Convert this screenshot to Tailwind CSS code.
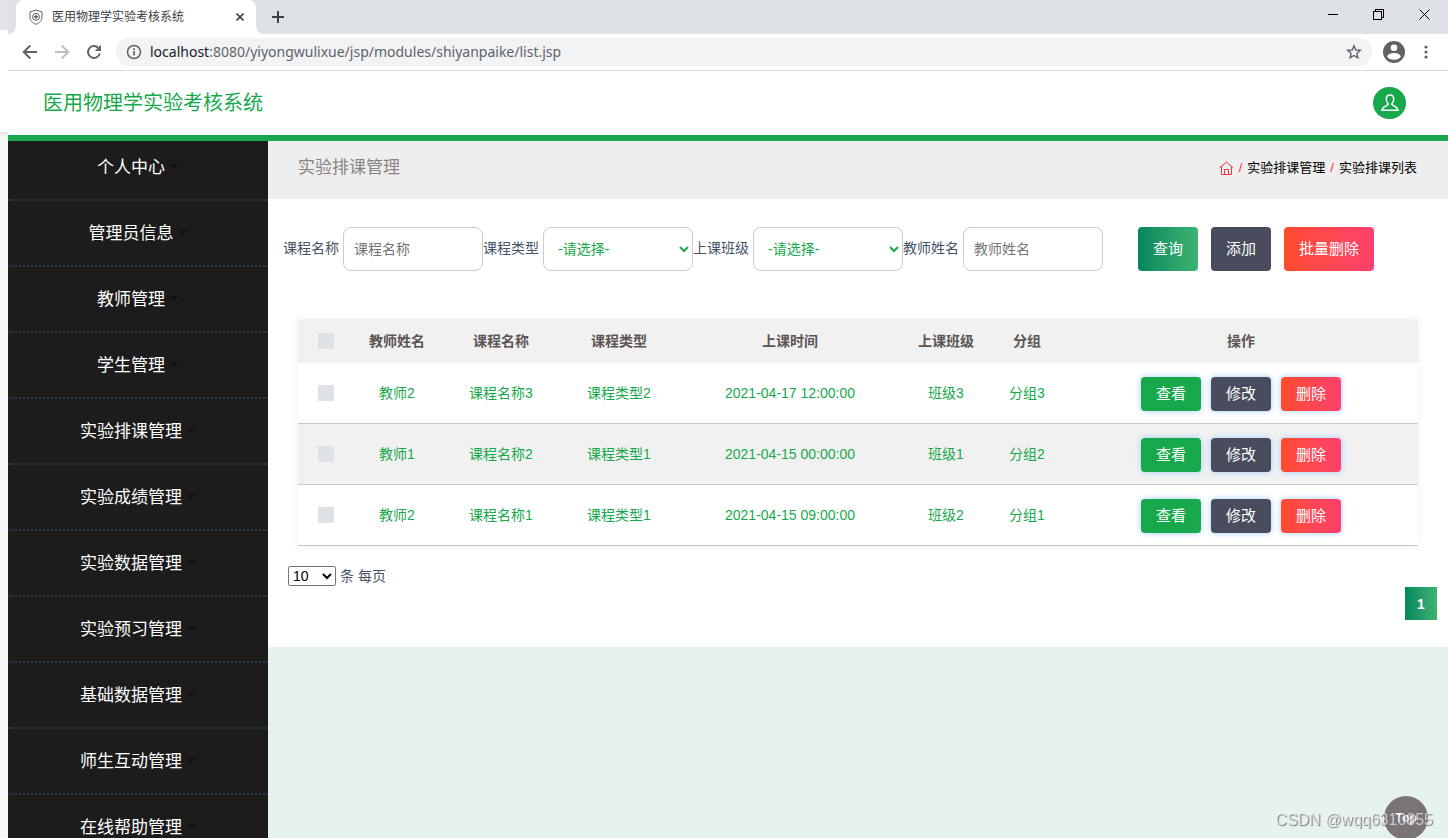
<!DOCTYPE html>
<html lang="zh-CN">
<head>
<meta charset="utf-8">
<title>医用物理学实验考核系统</title>
<script src="https://cdn.jsdelivr.net/npm/@tailwindcss/browser@4"></script>
</head>
<body class="flex h-screen overflow-hidden bg-white font-['Liberation_Sans','Noto_Sans_CJK_SC',sans-serif] text-sm text-[#455468]">

<!-- Edge of the window behind -->
<div class="flex w-2 shrink-0 flex-col">
  <div class="h-[30px] bg-[#e2e4e9]"></div>
  <div class="h-[102px] bg-white"></div>
  <div class="h-1 bg-linear-to-b from-[#e3e4e6] to-[#f5f7f9]"></div>
  <div class="flex-1 bg-[#f5f7f9]"></div>
</div>

<div class="flex min-w-0 flex-1 flex-col">
  <!-- Browser chrome -->
  <div class="flex h-[34px] shrink-0 bg-[#dee1e6]">
    <div class="flex w-2 items-end bg-white"><div class="h-full w-full rounded-br-lg bg-[#dee1e6]"></div></div>
    <div class="flex w-60 items-center rounded-t-lg bg-white pr-2 pl-3">
      <svg class="mr-2 size-4" viewBox="0 0 16 16" fill="none" stroke="#5f6368"><path d="M8 1 L14 3 V8 C14 11.500 11.500 14 8 15.300 C4.500 14 2 11.500 2 8 V3 Z"/><circle cx="8" cy="7.800" r="3.500"/><path d="M8 5.800 V9.800 M6 7.800 H10" stroke-width="1.500"/></svg>
      <span class="flex-1 text-xs text-[#3c4043]">医用物理学实验考核系统</span>
      <button aria-label="关闭标签页" class="flex size-4 items-center justify-center"><svg class="size-2" viewBox="0 0 8 8" stroke="#3c4043" stroke-width="1.600"><path d="M0.500 0.500 L7.500 7.500 M7.500 0.500 L0.500 7.500"/></svg></button>
    </div>
    <div class="w-2 bg-white"><div class="h-full w-full rounded-bl-lg bg-[#dee1e6]"></div></div>
    <button aria-label="新标签页" class="ml-2 flex w-3 items-center justify-center"><svg class="size-3 shrink-0" viewBox="0 0 12 12" stroke="#3c4043" stroke-width="2"><path d="M6 0 V12 M0 6 H12"/></svg></button>
    <div class="flex-1"></div>
    <div class="flex h-7 items-center pr-px">
      <button aria-label="最小化" class="flex w-[46px] justify-center"><svg class="size-[11px]" viewBox="0 0 11 11" stroke="#000" shape-rendering="crispEdges"><path d="M0.500 5.500 H10.500"/></svg></button>
      <button aria-label="还原" class="flex w-[46px] justify-center"><svg class="size-[11px]" viewBox="0 0 11 11" fill="none" stroke="#000" shape-rendering="crispEdges"><path d="M0.500 2.500 H8.500 V10.500 H0.500 Z M2.500 2.500 V0.500 H10.500 V8.500 H8.500"/></svg></button>
      <button aria-label="关闭" class="flex w-[46px] justify-center"><svg class="size-[11px]" viewBox="0 0 11 11" stroke="#000"><path d="M0.500 0.500 L10.500 10.500 M10.500 0.500 L0.500 10.500"/></svg></button>
    </div>
  </div>
  <div class="flex h-[37px] shrink-0 items-center border-b border-[#d9dadc] bg-white pr-[14px] pl-[14px]">
    <button aria-label="后退"><svg class="size-4" viewBox="0 0 16 16" fill="none" stroke="#5f6368" stroke-width="2"><path d="M15 8 H2 M8.300 1.500 L1.800 8 L8.300 14.500"/></svg></button>
    <button aria-label="前进" class="ml-4"><svg class="size-4" viewBox="0 0 16 16" fill="none" stroke="#bdbfc2" stroke-width="2"><path d="M1 8 H14 M7.700 1.500 L14.200 8 L7.700 14.500"/></svg></button>
    <button aria-label="重新加载" class="ml-4"><svg class="size-4" viewBox="0 0 16 16" fill="none" stroke="#5f6368" stroke-width="2"><path d="M13.800 9.500 A6 6 0 1 1 12.300 3.800"/><path d="M15 0.800 V7 H8.800 Z" fill="#5f6368" stroke="none"/></svg></button>
    <div class="ml-[14px] flex h-7 flex-1 items-center rounded-full bg-[#f1f3f4] pr-[10px] pl-[10px]">
      <svg class="mr-2 size-4" viewBox="0 0 16 16" fill="none" stroke="#5f6368" stroke-width="1.500"><circle cx="8" cy="8" r="6.500"/><path d="M8 7 V11.500 M8 4.300 V6" stroke-width="1.700"/></svg>
      <span class="flex-1 font-['Noto_Sans',sans-serif] text-sm text-[#5f6368]"><span class="text-[#202124]">localhost</span>:8080/yiyongwulixue/jsp/modules/shiyanpaike/list.jsp</span>
      <button aria-label="收藏"><svg class="size-4" viewBox="0 0 16 16" fill="none" stroke="#5f6368" stroke-width="1.400"><path d="M8 1.800 L9.800 6 L14.300 6.400 L10.900 9.400 L11.900 13.800 L8 11.500 L4.100 13.800 L5.100 9.400 L1.700 6.400 L6.200 6 Z"/></svg></button>
    </div>
    <button aria-label="用户" class="ml-[11px]"><svg class="size-[22px]" viewBox="0 0 22 22"><circle cx="11" cy="11" r="11" fill="#5f6368"/><circle cx="11" cy="6.800" r="3.300" fill="#fff"/><ellipse cx="11" cy="15.300" rx="6.600" ry="3.400" fill="#fff"/></svg></button>
    <button aria-label="菜单" class="ml-[13px]"><svg class="size-4" viewBox="0 0 16 16" fill="#5f6368"><circle cx="8" cy="3" r="1.600"/><circle cx="8" cy="8" r="1.600"/><circle cx="8" cy="13" r="1.600"/></svg></button>
  </div>

  <!-- Site header -->
  <header class="flex h-[70px] shrink-0 items-center justify-between border-b-6 border-[#17a84b] bg-white pr-[42px] pb-px pl-[35px]">
    <h1 class="text-xl text-[#17a84b]">医用物理学实验考核系统</h1>
    <button aria-label="账号" class="flex h-8 w-[33px] items-center justify-center rounded-full bg-[#17a84b]"><svg class="size-[18px]" viewBox="0 0 18 18" fill="none" stroke="#fff" stroke-width="1.500"><path d="M9 1 C6.300 1 5.300 2.700 5.300 5 C5.300 7.200 6 8.900 7.300 9.800 C7.400 12 1.500 12 1 16.300 H17 C16.500 12 10.600 12 10.700 9.800 C12 8.900 12.700 7.200 12.700 5 C12.700 2.700 11.700 1 9 1 Z"/></svg></button>
  </header>

  <div class="flex min-h-0 flex-1">
    <nav class="w-[260px] shrink-0 overflow-hidden bg-[#1c1c1c] text-[17px] text-white">
      <ul class="-mt-[6px]">
        <li class="flex h-[66px] items-center justify-center border-b-2 border-dotted border-[#2d3646] pt-[3px]"><a href="#" class="flex items-center gap-1">个人中心<i class="mb-1 border-x-5 border-t-5 border-x-transparent border-t-[#121212]"></i></a></li>
        <li class="flex h-[66px] items-center justify-center border-b-2 border-dotted border-[#2d3646] pt-[3px]"><a href="#" class="flex items-center gap-1">管理员信息<i class="mb-1 border-x-5 border-t-5 border-x-transparent border-t-[#121212]"></i></a></li>
        <li class="flex h-[66px] items-center justify-center border-b-2 border-dotted border-[#2d3646] pt-[3px]"><a href="#" class="flex items-center gap-1">教师管理<i class="mb-1 border-x-5 border-t-5 border-x-transparent border-t-[#121212]"></i></a></li>
        <li class="flex h-[66px] items-center justify-center border-b-2 border-dotted border-[#2d3646] pt-[3px]"><a href="#" class="flex items-center gap-1">学生管理<i class="mb-1 border-x-5 border-t-5 border-x-transparent border-t-[#121212]"></i></a></li>
        <li class="flex h-[66px] items-center justify-center border-b-2 border-dotted border-[#2d3646] pt-[3px]"><a href="#" class="flex items-center gap-1">实验排课管理<i class="mb-1 border-x-5 border-t-5 border-x-transparent border-t-[#121212]"></i></a></li>
        <li class="flex h-[66px] items-center justify-center border-b-2 border-dotted border-[#2d3646] pt-[3px]"><a href="#" class="flex items-center gap-1">实验成绩管理<i class="mb-1 border-x-5 border-t-5 border-x-transparent border-t-[#121212]"></i></a></li>
        <li class="flex h-[66px] items-center justify-center border-b-2 border-dotted border-[#2d3646] pt-[3px]"><a href="#" class="flex items-center gap-1">实验数据管理<i class="mb-1 border-x-5 border-t-5 border-x-transparent border-t-[#121212]"></i></a></li>
        <li class="flex h-[66px] items-center justify-center border-b-2 border-dotted border-[#2d3646] pt-[3px]"><a href="#" class="flex items-center gap-1">实验预习管理<i class="mb-1 border-x-5 border-t-5 border-x-transparent border-t-[#121212]"></i></a></li>
        <li class="flex h-[66px] items-center justify-center border-b-2 border-dotted border-[#2d3646] pt-[3px]"><a href="#" class="flex items-center gap-1">基础数据管理<i class="mb-1 border-x-5 border-t-5 border-x-transparent border-t-[#121212]"></i></a></li>
        <li class="flex h-[66px] items-center justify-center border-b-2 border-dotted border-[#2d3646] pt-[3px]"><a href="#" class="flex items-center gap-1">师生互动管理<i class="mb-1 border-x-5 border-t-5 border-x-transparent border-t-[#121212]"></i></a></li>
        <li class="flex h-[66px] items-center justify-center border-b-2 border-dotted border-[#2d3646] pt-[3px]"><a href="#" class="flex items-center gap-1">在线帮助管理<i class="mb-1 border-x-5 border-t-5 border-x-transparent border-t-[#121212]"></i></a></li>
      </ul>
    </nav>

    <main class="min-w-0 flex-1 bg-[#e6f2ec]">
      <div class="flex h-[58px] items-center justify-between bg-[#eeeeee] pr-[31px] pb-1 pl-[30px]">
        <h2 class="text-[17px] text-[#888380]">实验排课管理</h2>
        <div class="flex items-center gap-[5px] text-[13px] text-[#f0283c]">
          <a href="#" aria-label="首页"><svg class="size-[15px]" viewBox="0 0 15 15" fill="none" stroke="#ee3344"><path d="M0.800 6.800 L7.500 1 L14.200 6.800 M2.500 5.600 V13.500 H12.500 V5.600 M5.500 13.500 V8.500 H9.500 V13.500"/></svg></a>
          <span>/</span><a href="#" class="text-black">实验排课管理</a><span>/</span><span class="text-black">实验排课列表</span>
        </div>
      </div>

      <div class="bg-white pt-7 pb-[27px]">
        <form class="flex items-center pl-[15px]">
          <label for="course" class="mr-1 pb-[2px]">课程名称</label>
          <input id="course" type="text" placeholder="课程名称" class="h-11 w-[140px] rounded-lg border border-[#cccccc] px-[10px] placeholder:text-[#757575]">
          <label for="type" class="mr-1 pb-[2px]">课程类型</label>
          <select id="type" class="h-11 w-[150px] rounded-lg border border-[#cccccc] bg-white pl-[10px] text-[#17a84b]"><option>-请选择-</option></select>
          <label for="class" class="mr-1 pb-[2px]">上课班级</label>
          <select id="class" class="h-11 w-[150px] rounded-lg border border-[#cccccc] bg-white pl-[10px] text-[#17a84b]"><option>-请选择-</option></select>
          <label for="teacher" class="mr-1 pb-[2px]">教师姓名</label>
          <input id="teacher" type="text" placeholder="教师姓名" class="h-11 w-[140px] rounded-lg border border-[#cccccc] px-[10px] placeholder:text-[#757575]">
          <div class="ml-[35px] flex gap-[13px] text-[15px] text-white">
            <button type="button" class="h-11 w-[60px] rounded bg-linear-to-r from-[#00875f] to-[#3cb371]">查询</button>
            <button type="button" class="h-11 w-[60px] rounded bg-[#484c5c]">添加</button>
            <button type="button" class="h-11 w-[90px] rounded bg-linear-to-r from-[#ff4b2b] to-[#ff416c]">批量删除</button>
          </div>
        </form>

        <div class="mx-[30px] mt-12 shadow-[0_0_10px_rgba(0,0,0,0.06)]">
          <table class="w-full table-fixed border-separate border-spacing-0 text-center text-[#17a84b]">
            <colgroup><col class="w-[5%]"><col class="w-[86px]"><col class="w-[122px]"><col class="w-[114px]"><col class="w-[228px]"><col class="w-[84px]"><col class="w-[78px]"><col></colgroup>
            <thead class="bg-[#f1f1f1] text-[#5c5555]">
              <tr class="h-11">
                <th class="align-middle"><input type="checkbox" aria-label="全选" class="mx-auto block size-4 appearance-none bg-[#dee2e6]"></th>
                <th>教师姓名</th><th>课程名称</th><th>课程类型</th><th>上课时间</th><th>上课班级</th><th>分组</th><th class="pr-[2px]">操作</th>
              </tr>
            </thead>
            <tbody class="[&_td]:border-b [&_td]:border-[#c8c8c8]">
              <tr class="h-[61px] bg-white">
                <td><input type="checkbox" aria-label="选择第1行" class="mx-auto block size-4 appearance-none bg-[#dee2e6]"></td>
                <td>教师2</td><td>课程名称3</td><td>课程类型2</td><td>2021-04-17 12:00:00</td><td>班级3</td><td>分组3</td>
                <td><div class="flex justify-center gap-[10px] pt-[2px] pr-[2px] text-[15px] text-white">
                  <button class="h-[34px] w-[60px] rounded bg-[#17a84b] shadow-[0_0_6px_#9fcdfa]">查看</button>
                  <button class="h-[34px] w-[60px] rounded bg-[#484c5c] shadow-[0_0_6px_#9fcdfa]">修改</button>
                  <button class="h-[34px] w-[60px] rounded bg-linear-to-r from-[#ff4b2b] to-[#ff416c] shadow-[0_0_6px_#9fcdfa]">删除</button>
                </div></td>
              </tr>
              <tr class="h-[61px] bg-[#f1f1f1]">
                <td><input type="checkbox" aria-label="选择第2行" class="mx-auto block size-4 appearance-none bg-[#dee2e6]"></td>
                <td>教师1</td><td>课程名称2</td><td>课程类型1</td><td>2021-04-15 00:00:00</td><td>班级1</td><td>分组2</td>
                <td><div class="flex justify-center gap-[10px] pt-[2px] pr-[2px] text-[15px] text-white">
                  <button class="h-[34px] w-[60px] rounded bg-[#17a84b] shadow-[0_0_6px_#9fcdfa]">查看</button>
                  <button class="h-[34px] w-[60px] rounded bg-[#484c5c] shadow-[0_0_6px_#9fcdfa]">修改</button>
                  <button class="h-[34px] w-[60px] rounded bg-linear-to-r from-[#ff4b2b] to-[#ff416c] shadow-[0_0_6px_#9fcdfa]">删除</button>
                </div></td>
              </tr>
              <tr class="h-[61px] bg-white">
                <td><input type="checkbox" aria-label="选择第3行" class="mx-auto block size-4 appearance-none bg-[#dee2e6]"></td>
                <td>教师2</td><td>课程名称1</td><td>课程类型1</td><td>2021-04-15 09:00:00</td><td>班级2</td><td>分组1</td>
                <td><div class="flex justify-center gap-[10px] pt-[2px] pr-[2px] text-[15px] text-white">
                  <button class="h-[34px] w-[60px] rounded bg-[#17a84b] shadow-[0_0_6px_#9fcdfa]">查看</button>
                  <button class="h-[34px] w-[60px] rounded bg-[#484c5c] shadow-[0_0_6px_#9fcdfa]">修改</button>
                  <button class="h-[34px] w-[60px] rounded bg-linear-to-r from-[#ff4b2b] to-[#ff416c] shadow-[0_0_6px_#9fcdfa]">删除</button>
                </div></td>
              </tr>
            </tbody>
          </table>
        </div>

        <div class="mt-5 flex items-center gap-1 pl-5">
          <select id="size" class="h-5 w-12 rounded-xs border border-[#767676] bg-white text-black"><option>10</option></select>
          <label for="size">条 每页</label>
        </div>
        <div class="mt-px flex justify-end pr-[11px]">
          <button class="h-[33px] w-8 bg-linear-to-r from-[#00875f] to-[#3cb371] font-bold text-white">1</button>
        </div>
      </div>
    </main>
  </div>
</div>

<a href="#" class="fixed right-5 -bottom-[2px] flex size-11 items-center justify-center rounded-full bg-[#7a7479] text-xs font-bold text-white">Top</a>
<div class="pointer-events-none fixed right-[15px] bottom-[6px] text-base text-white/60 [text-shadow:1px_1px_1px_#777777]">CSDN @wqq6310855</div>
</body>
</html>
